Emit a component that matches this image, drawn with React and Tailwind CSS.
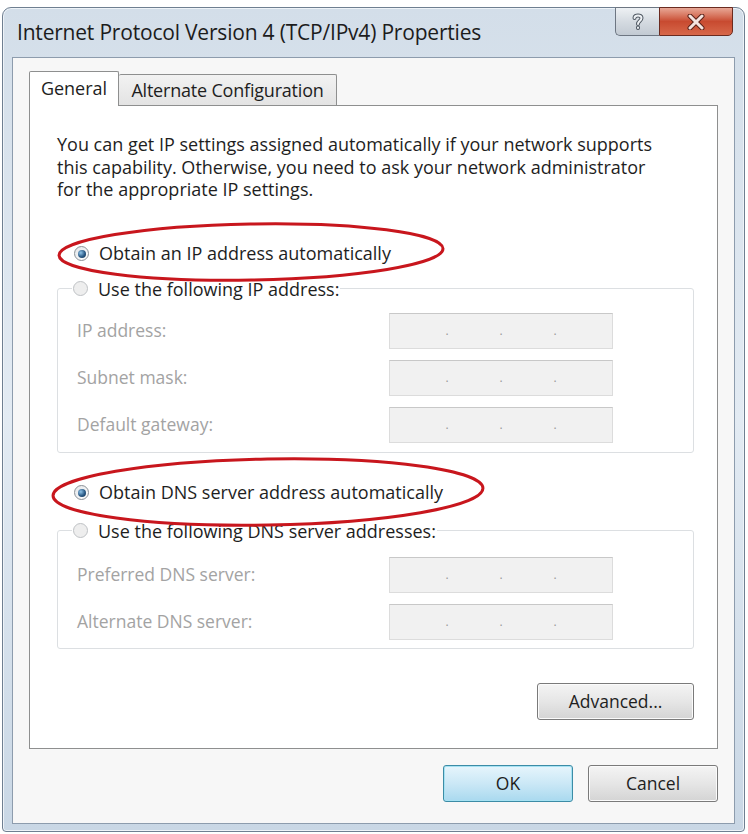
import React from 'react';

const font = { fontFamily: '"Open Sans", "Noto Sans", sans-serif' };

function Radio({ checked, disabled }) {
  return (
    <span
      className={`relative inline-flex h-[15px] w-[15px] shrink-0 items-center justify-center rounded-full border ${
        disabled ? 'border-[#bfc2c5] bg-[#eeeeee]' : 'border-[#8a9096] bg-gradient-to-br from-[#e3e6e9] to-[#ffffff]'
      }`}
    >
      {checked && (
        <span className="h-[8px] w-[8px] rounded-full bg-[radial-gradient(circle_at_35%_35%,#8fc3e8,#2a5a86_55%,#17324d)]" />
      )}
    </span>
  );
}

function IpBox() {
  return (
    <div className="flex h-[36px] w-[224px] items-center justify-around border border-[#dcdcdc] border-t-[#c8c8c8] bg-[#f1f1f1] px-[30px] text-[#9a9a9a]">
      <span className="text-[12px] leading-none">.</span>
      <span className="text-[12px] leading-none">.</span>
      <span className="text-[12px] leading-none">.</span>
    </div>
  );
}

function FieldRow({ label }) {
  return (
    <div className="flex h-[36px] items-center justify-between pl-[19px] pr-[80px]">
      <span className="text-[17.5px] text-[#a3a3a3]">{label}</span>
      <IpBox />
    </div>
  );
}

function Button({ children, className = '', focused }) {
  return (
    <button
      className={`flex h-[37px] items-center justify-center rounded-[3px] border text-[17.5px] text-[#1e1e1e] ${
        focused
          ? 'border-[#3c8ca6] bg-gradient-to-b from-[#e6f5fc] via-[#cbe8f6] to-[#a9d9ef] shadow-[inset_0_0_0_1px_#a6e2f3]'
          : 'border-[#7a7a7a] bg-gradient-to-b from-[#f4f4f4] via-[#e6e6e6] to-[#d4d4d4] shadow-[inset_0_0_0_1px_#fbfbfb]'
      } ${className}`}
    >
      {children}
    </button>
  );
}

export default function App() {
  return (
    <div className="relative h-[834px] w-[748px] overflow-hidden bg-white" style={font}>
      <div className="ml-[2px] mt-[7px] flex h-[825px] w-[743px] flex-col rounded-t-[9px] rounded-b-[4px] border border-[#6f7f91] bg-gradient-to-b from-[#d3dee9] via-[#e3ebf3] to-[#c9d7e5] px-[9px] pb-[7px] shadow-[inset_0_0_0_1px_#eef3f8]">
        {/* title bar */}
        <div className="relative flex h-[49px] shrink-0 items-center pl-[5px]">
          <span className="text-[21px] tracking-[-0.2px] text-[#1c1c1c]">Internet Protocol Version 4 (TCP/IPv4) Properties</span>
          <div className="absolute right-[2px] top-[-1px] flex">
            <div className="flex h-[29px] w-[44px] items-center justify-center rounded-bl-[5px] border border-r-0 border-[#6d7682] bg-gradient-to-b from-[#eef1f4] via-[#d5dbe1] to-[#c2cad3]">
              <svg width="14" height="18" viewBox="0 0 14 18">
                <path d="M3.5 5 C3.5 1.5 10.5 1.5 10.5 5 C10.5 8 7 8 7 11 M7 14.5 L7 15" fill="none" stroke="#4d5660" strokeWidth="4" strokeLinecap="round" />
                <path d="M3.5 5 C3.5 1.5 10.5 1.5 10.5 5 C10.5 8 7 8 7 11 M7 14.5 L7 15" fill="none" stroke="#eef1f4" strokeWidth="2" strokeLinecap="round" />
              </svg>
            </div>
            <div className="flex h-[29px] w-[74px] items-center justify-center rounded-br-[5px] border border-[#6a2b20] bg-gradient-to-b from-[#e7a796] via-[#c84a30] to-[#d7684a]">
              <svg width="18" height="16" viewBox="0 0 18 16">
                <path d="M3 2 L15 14 M15 2 L3 14" stroke="#5a2118" strokeWidth="5" strokeLinecap="round" />
                <path d="M3 2 L15 14 M15 2 L3 14" stroke="#f4e4e0" strokeWidth="3" strokeLinecap="round" />
              </svg>
            </div>
          </div>
        </div>

        {/* client area */}
        <div className="flex flex-1 flex-col border border-[#8d9cad] bg-[#f7f7f7] px-[16px] pb-[16px] pt-[12px]">
          {/* tabs */}
          <div className="flex h-[35px] items-end">
            <div className="relative z-10 -mb-px flex h-[35px] w-[90px] items-center justify-center rounded-t-[2px] border border-b-0 border-[#8e8f8f] bg-white pb-[2px] text-[18px] text-[#1e1e1e]">
              General
            </div>
            <div className="flex h-[31px] w-[218px] items-center justify-center rounded-t-[2px] border border-b-0 border-l-0 border-[#8e8f8f] bg-gradient-to-b from-[#f2f2f2] to-[#e3e3e3] text-[18px] tracking-[-0.2px] text-[#1e1e1e]">
              Alternate Configuration
            </div>
          </div>

          {/* panel */}
          <div className="flex h-[644px] flex-col border border-[#8e8f8f] bg-white pl-[27px] pr-[23px] pt-[27px]">
            <p className="text-[18px] leading-[22.5px] text-[#1e1e1e]">
              You can get IP settings assigned automatically if your network supports
              <br />
              this capability. Otherwise, you need to ask your network administrator
              <br />
              for the appropriate IP settings.
            </p>

            <div className="mt-[41px] flex h-[24px] items-center gap-[10px] pl-[17px]">
              <Radio checked />
              <span className="text-[18px] text-[#1e1e1e]">Obtain an IP address automatically</span>
            </div>

            <fieldset className="mt-[11px] h-[176px] rounded-[3px] border border-[#dcdfe2] px-0 pb-[10px] pt-[12px]">
              <legend className="ml-[14px] flex h-[24px] items-center gap-[10px] px-[1px]">
                <Radio disabled />
                <span className="text-[18px] leading-[24px] text-[#1e1e1e]">Use the following IP address:</span>
              </legend>
              <div className="flex flex-col gap-[11px]">
                <FieldRow label="IP address:" />
                <FieldRow label="Subnet mask:" />
                <FieldRow label="Default gateway:" />
              </div>
            </fieldset>

            <div className="mt-[28px] flex h-[24px] items-center gap-[10px] pl-[17px]">
              <Radio checked />
              <span className="text-[18px] text-[#1e1e1e]">Obtain DNS server address automatically</span>
            </div>

            <fieldset className="mt-[14px] h-[130px] rounded-[3px] border border-[#dcdfe2] px-0 pb-[10px] pt-[14px]">
              <legend className="ml-[14px] flex h-[24px] items-center gap-[10px] px-[1px]">
                <Radio disabled />
                <span className="text-[18px] leading-[24px] text-[#1e1e1e]">Use the following DNS server addresses:</span>
              </legend>
              <div className="flex flex-col gap-[11px]">
                <FieldRow label="Preferred DNS server:" />
                <FieldRow label="Alternate DNS server:" />
              </div>
            </fieldset>

            <div className="mt-[34px] flex justify-end">
              <Button className="w-[157px]">Advanced...</Button>
            </div>
          </div>

          {/* dialog buttons */}
          <div className="mt-[16px] flex justify-end gap-[15px]">
            <Button focused className="w-[130px]">OK</Button>
            <Button className="w-[130px]">Cancel</Button>
          </div>
        </div>
      </div>

      {/* red annotation ellipses */}
      <svg className="pointer-events-none absolute left-0 top-0" width="748" height="834">
        <ellipse cx="251" cy="252" rx="192" ry="28" fill="none" stroke="#c8161d" strokeWidth="3" transform="rotate(-1 251 252)" />
        <ellipse cx="268" cy="492" rx="215" ry="33" fill="none" stroke="#c8161d" strokeWidth="3" transform="rotate(-1 268 492)" />
      </svg>
    </div>
  );
}
